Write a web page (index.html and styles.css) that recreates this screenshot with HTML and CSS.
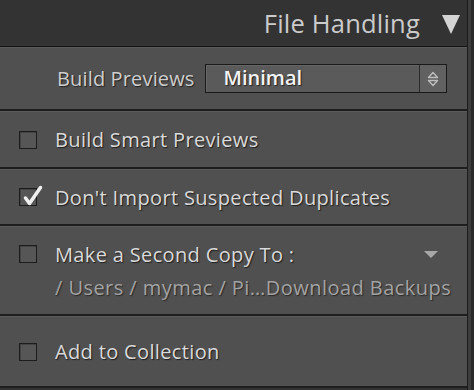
FILE: index.html
```html
<!DOCTYPE html>
<html lang="en">
<head>
  <meta charset="UTF-8" />
  <meta name="viewport" content="width=device-width, initial-scale=1.0" />
  <title>File Handling</title>
  <link rel="stylesheet" href="styles.css">
</head>
<body>

  <div class="frame">
    <div class="panel">
      <div class="panel-header">
        <span class="panel-title">File Handling</span>
        <span class="collapse-arrow"></span>
      </div>

      <div class="section previews">
        <span class="field-label">Build Previews</span>
        <div class="select">
          <span class="select-value">Minimal</span>
          <span class="select-arrows">
            <svg width="14" height="18" viewBox="0 0 14 18">
              <path d="M2.5 7.5 L7 2.5 L11.5 7.5 Z" fill="none" stroke="#bdbdbd" stroke-width="1.4" stroke-linejoin="round"/>
              <path d="M2.5 10.5 L7 15.5 L11.5 10.5 Z" fill="none" stroke="#bdbdbd" stroke-width="1.4" stroke-linejoin="round"/>
            </svg>
          </span>
        </div>
      </div>

      <div class="section smart">
        <span class="checkbox"></span>
        <span class="option">Build Smart Previews</span>
      </div>

      <div class="section duplicates">
        <span class="checkbox checked">
          <svg width="24" height="24" viewBox="0 0 24 24">
            <path d="M5.5 14 L9.5 19.5 L20.5 3.5" fill="none" stroke="#f0f0f0" stroke-width="3.5" stroke-linecap="round" stroke-linejoin="round"/>
          </svg>
        </span>
        <span class="option">Don't Import Suspected Duplicates</span>
      </div>

      <div class="section second-copy">
        <div class="copy-row">
          <span class="checkbox"></span>
          <span class="option">Make a Second Copy To :</span>
          <span class="small-arrow"></span>
        </div>
        <div class="path">/ Users / mymac / Pi…Download Backups</div>
      </div>

      <div class="section collection">
        <span class="checkbox"></span>
        <span class="option">Add to Collection</span>
      </div>
    </div>
    <div class="scroll-track"></div>
  </div>

</body>
</html>
```

FILE: styles.css
```css
body {
  margin: 0;
  background-color: #333333;
  font-family: 'Open Sans', sans-serif;
  color: #d6d6d6;
}

.frame {
  display: flex;
  width: 474px;
  height: 390px;
  overflow: hidden;
}

.panel {
  width: 467px;
  flex: none;
  border-right: 1px solid #1c1c1c;
}

.scroll-track {
  flex: 1;
  background-color: #3d3d3d;
  border-right: 3px solid #2a2a2a;
}

.panel-header {
  height: 46px;
  background-color: #333333;
  display: flex;
  align-items: center;
  justify-content: flex-end;
  padding-right: 7px;
  border-bottom: 1px solid #141414;
}

.panel-title {
  font-size: 25.5px;
  color: #cbcbcb;
  margin-right: 22px;
  letter-spacing: 0.2px;
}

.collapse-arrow {
  width: 0;
  height: 0;
  border-left: 9px solid transparent;
  border-right: 9px solid transparent;
  border-top: 19px solid #d4d4d4;
  margin-top: 2px;
}

.section {
  display: flex;
  align-items: center;
  background-color: #505050;
  border-top: 1px solid #5a5a5a;
  border-bottom: 2px solid #1e1e1e;
  padding-left: 19px;
  box-sizing: border-box;
}

.previews { height: 64px; padding-left: 57px; }
.smart { height: 58px; }
.duplicates { height: 57px; }
.second-copy { height: 90px; flex-direction: column; align-items: stretch; justify-content: center; }
.collection { height: 72px; }

.field-label {
  font-size: 20px;
  color: #cfcfcf;
  text-shadow: 1px 1px 1px #222;
  margin-right: 10px;
  letter-spacing: 0.15px;
}

.select {
  display: flex;
  width: 242px;
  height: 29px;
  background-color: #5a5a5a;
  border: 1px solid #1a1a1a;
  box-shadow: inset 1px 1px 0 #666;
  box-sizing: border-box;
}

.select-value {
  flex: 1;
  font-size: 20px;
  font-weight: 600;
  color: #f4f4f4;
  padding-left: 18px;
  line-height: 26px;
  text-shadow: 1px 1px 1px #222;
}

.select-arrows {
  width: 26px;
  border-left: 1px solid #2a2a2a;
  background-color: #616161;
  display: flex;
  align-items: center;
  justify-content: center;
}

.checkbox {
  width: 18px;
  height: 18px;
  border: 1px solid #1c1c1c;
  background-color: #565656;
  box-shadow: inset 1px 1px 0 #444;
  flex: none;
  position: relative;
  box-sizing: border-box;
}

.checkbox.checked svg {
  position: absolute;
  left: 0;
  top: -5px;
}

.option {
  font-size: 20px;
  color: #dadada;
  margin-left: 18px;
  letter-spacing: 0.35px;
  text-shadow: 1px 1px 1px #1f1f1f;
}

.copy-row {
  display: flex;
  align-items: center;
}

.small-arrow {
  margin-left: auto;
  margin-right: 29px;
  width: 0;
  height: 0;
  border-left: 7px solid transparent;
  border-right: 7px solid transparent;
  border-top: 7px solid #a8a8a8;
}

.path {
  font-size: 20px;
  color: #a3a3a3;
  padding-left: 36px;
  margin-top: 6px;
  letter-spacing: 0.45px;
  text-shadow: 1px 1px 1px #2a2a2a;
}
```
